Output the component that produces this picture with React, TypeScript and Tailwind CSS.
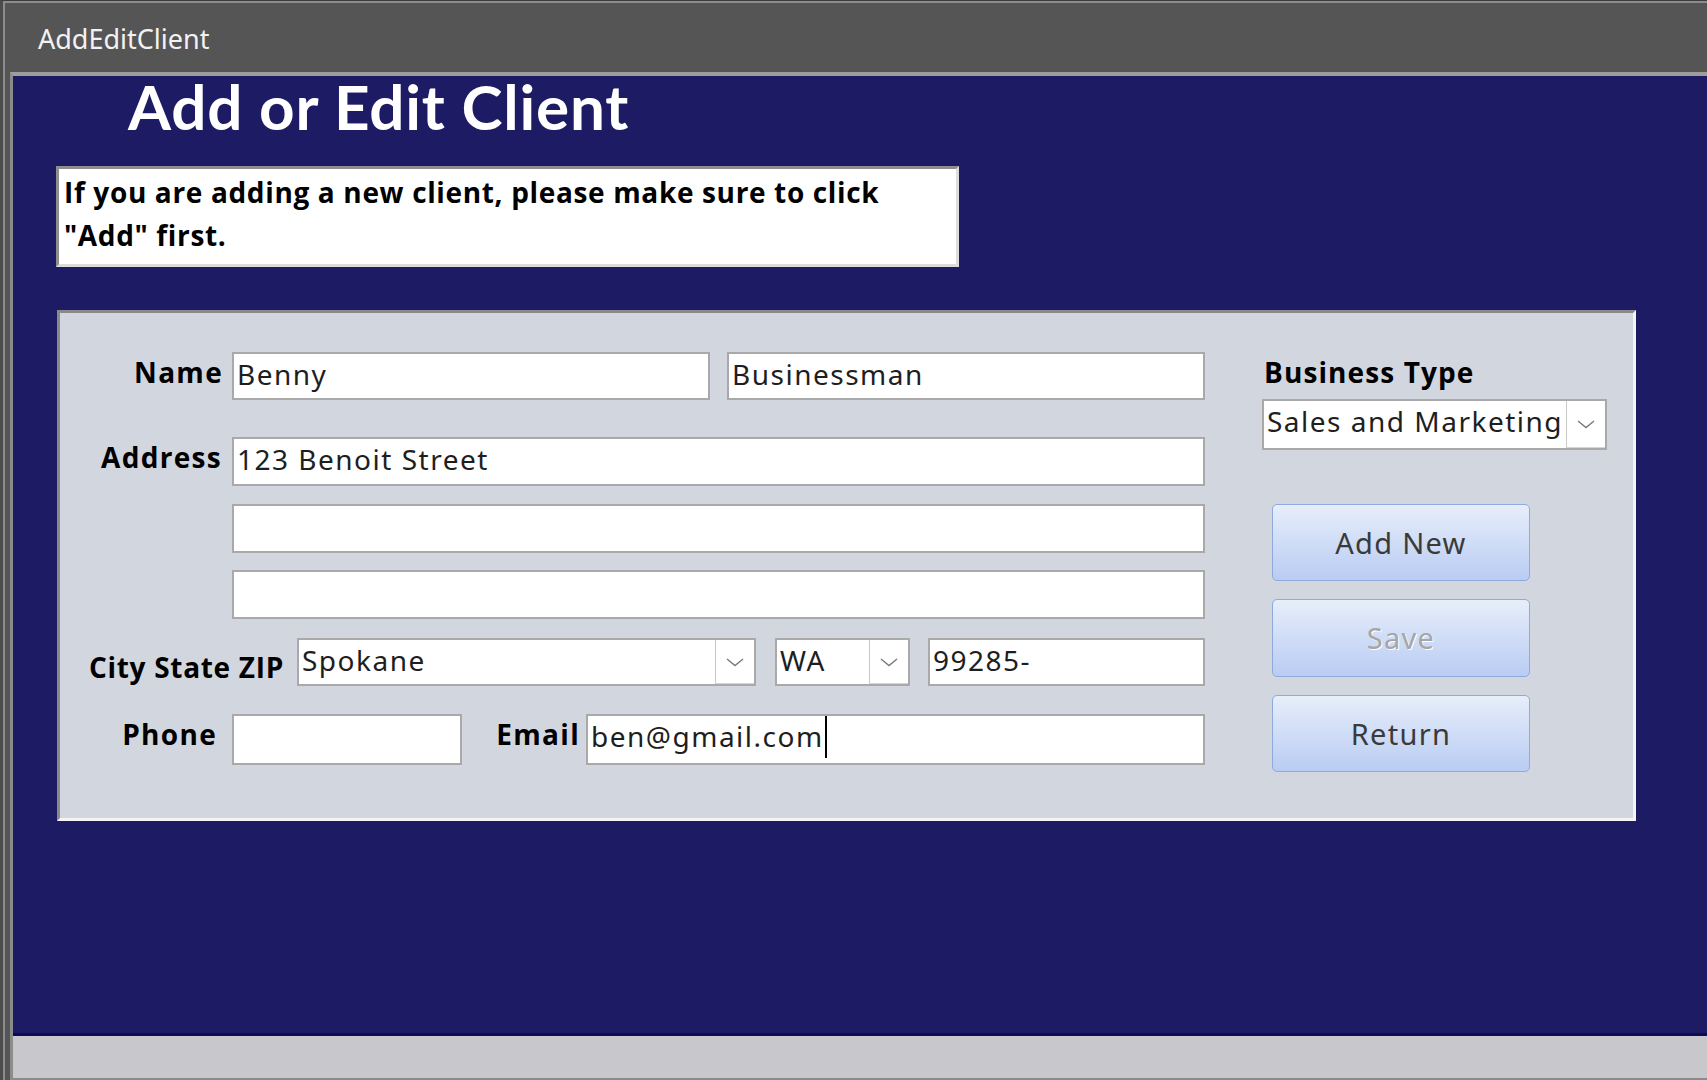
import React from "react";

const FIELD_TXT =
  "font-['Noto_Sans',sans-serif] text-[28px] leading-[38px] tracking-[1.5px] text-[#1e1e1e] whitespace-nowrap";
const LABEL =
  "font-['Open_Sans',sans-serif] font-bold text-[28px] leading-[32px] text-black whitespace-nowrap";

function Chevron() {
  return (
    <svg width="20" height="10" viewBox="0 0 20 10" fill="none">
      <polyline points="2,2 10,8.5 18,2" stroke="#7a7a7a" strokeWidth="1.4" />
    </svg>
  );
}

function Field({
  w,
  h,
  text,
  cursor,
}: {
  w: string;
  h: string;
  text?: string;
  cursor?: boolean;
}) {
  return (
    <div className={`${w} ${h} shrink-0 bg-white border-2 border-[#a9a9a9] flex items-start pl-[3px] pt-[1px] overflow-hidden`}>
      {text && <span className={FIELD_TXT}>{text}</span>}
      {cursor && <div className="w-[2px] h-[42px] bg-black -mt-[1px] ml-[1px]" />}
    </div>
  );
}

function Combo({ w, h, text }: { w: string; h: string; text: string }) {
  return (
    <div className={`${w} ${h} shrink-0 bg-white border-2 border-[#a9a9a9] flex`}>
      <div className="flex-1 pl-[3px] pt-[1px] overflow-hidden">
        <span className={FIELD_TXT}>{text}</span>
      </div>
      <div className="w-[39px] h-full border-l border-[#c9c9c9] border-b border-b-[#d4d4d4] bg-white flex items-center justify-center">
        <Chevron />
      </div>
    </div>
  );
}

function Btn({ label, disabled, h }: { label: string; disabled?: boolean; h: string }) {
  return (
    <div
      className={`w-[258px] ${h} rounded-[5px] border-[1.5px] border-[#8eaadf] bg-gradient-to-b from-[#e7eefa] to-[#b9ccf3] flex items-center justify-center`}
    >
      <span
        className={`font-['Noto_Sans',sans-serif] text-[29px] tracking-[1.3px] leading-[40px] ${
          disabled ? "text-[#a6a6a6] [text-shadow:1px_1px_0_#ffffff]" : "text-[#3a3a3a]"
        }`}
      >
        {label}
      </span>
    </div>
  );
}

export default function App() {
  return (
    <div className="w-[1707px] h-[1080px] overflow-hidden bg-[#555555] border-t border-t-[#3d3d3d] border-l-[3px] border-l-[#4c4c4c]">
      <div className="h-full flex flex-col border-t-2 border-t-[#8d8d8d] border-l-2 border-l-[#8c8c8c]">
        {/* Title bar */}
        <div className="h-[69px] shrink-0 pl-[33px] pt-[17px]">
          <span className="font-['Noto_Sans',sans-serif] text-[27px] leading-[37px] text-[#f2f2f2]">
            AddEditClient
          </span>
        </div>
        {/* Content */}
        <div className="flex-1 ml-[5px] flex flex-col border-t-[4px] border-t-[#9d9d9d] border-l-[3px] border-l-[#8c8c8c]">
          <div className="flex-1 bg-[#1c1b64] flex flex-col">
            <div className="pl-[115px] font-['Lato',sans-serif] font-bold text-[62px] leading-[61px] tracking-[0.8px] text-white whitespace-nowrap">
              Add or Edit Client
            </div>

            {/* Instruction box */}
            <div className="ml-[43px] mt-[29px] w-[903px] h-[101px] bg-white border-t-[3px] border-l-[3px] border-t-[#8e8e8e] border-l-[#8e8e8e] border-b-[3px] border-r-[3px] border-b-[#dcdcdc] border-r-[#dcdcdc] pl-[5px] pt-[2px]">
              <p className="font-['Open_Sans',sans-serif] font-bold text-[28px] leading-[43px] tracking-[0.65px] text-black whitespace-nowrap">
                If you are adding a new client, please make sure to click
                <br />
                "Add" first.
              </p>
            </div>

            {/* Panel */}
            <div className="ml-[44px] mt-[43px] w-[1579px] h-[511px] bg-[#d2d6df] border-t-[3px] border-l-[3px] border-t-[#8a8a8a] border-l-[#8a8a8a] border-b-[3px] border-r-[3px] border-b-[#f4f4f4] border-r-[#f4f4f4] flex pt-[39px]">
              {/* Left column */}
              <div className="w-[1145px] shrink-0 flex flex-col">
                {/* Name */}
                <div className="flex">
                  <div className={`w-[172px] shrink-0 text-right pr-[9px] pt-[4px] tracking-[1.3px] ${LABEL}`}>Name</div>
                  <Field w="w-[478px]" h="h-[48px]" text="Benny" />
                  <div className="w-[17px] shrink-0" />
                  <Field w="w-[478px]" h="h-[48px]" text="Businessman" />
                </div>
                {/* Address */}
                <div className="flex mt-[37px]">
                  <div className={`w-[172px] shrink-0 text-right pr-[10px] pt-[4px] tracking-[1.3px] ${LABEL}`}>Address</div>
                  <Field w="w-[973px]" h="h-[49px]" text="123 Benoit Street" />
                </div>
                <div className="flex mt-[18px] pl-[172px]">
                  <Field w="w-[973px]" h="h-[49px]" />
                </div>
                <div className="flex mt-[17px] pl-[172px]">
                  <Field w="w-[973px]" h="h-[49px]" />
                </div>
                {/* City State ZIP */}
                <div className="flex mt-[19px]">
                  <div className={`w-[237px] shrink-0 text-right pr-[13px] pt-[13px] tracking-[0.7px] ${LABEL}`}>City State ZIP</div>
                  <Combo w="w-[459px]" h="h-[48px]" text="Spokane" />
                  <div className="w-[19px] shrink-0" />
                  <Combo w="w-[135px]" h="h-[48px]" text="WA" />
                  <div className="w-[18px] shrink-0" />
                  <Field w="w-[277px]" h="h-[48px]" text="99285-" />
                </div>
                {/* Phone / Email */}
                <div className="flex mt-[28px]">
                  <div className={`w-[172px] shrink-0 text-right pr-[15px] pt-[4px] tracking-[1.3px] ${LABEL}`}>Phone</div>
                  <Field w="w-[230px]" h="h-[51px]" />
                  <div className={`w-[124px] shrink-0 text-right pr-[6px] pt-[4px] tracking-[1.3px] ${LABEL}`}>Email</div>
                  <Field w="w-[619px]" h="h-[51px]" text="ben@gmail.com" cursor />
                </div>
              </div>

              {/* Right column */}
              <div className="ml-[57px] w-[345px] shrink-0 flex flex-col">
                <div className={`pl-[2px] pt-[4px] tracking-[1.1px] ${LABEL}`}>Business Type</div>
                <div className="mt-[11px]">
                  <Combo w="w-[345px]" h="h-[51px]" text="Sales and Marketing" />
                </div>
                <div className="ml-[10px] mt-[54px] flex flex-col gap-[18px]">
                  <Btn label="Add New" h="h-[77px]" />
                  <Btn label="Save" h="h-[78px]" disabled />
                  <Btn label="Return" h="h-[77px]" />
                </div>
              </div>
            </div>
          </div>
          {/* bottom strip */}
          <div className="h-[3px] shrink-0 bg-[#0c0b58]" />
          <div className="h-[42px] shrink-0 bg-[#c8c8cc]" />
          <div className="h-[2px] shrink-0 bg-[#8a8a8a]" />
        </div>
      </div>
    </div>
  );
}
